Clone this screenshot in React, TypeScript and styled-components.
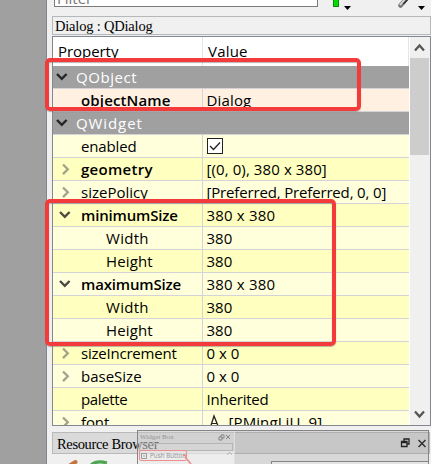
import React from "react";
import styled, { createGlobalStyle } from "styled-components";

const Global = createGlobalStyle`
  * { box-sizing: border-box; }
  body { margin: 0; overflow: hidden; background: #a0a0a0; }
`;
const Screen = styled.div`
  position: relative; display: flex; width: 431px; height: 464px; overflow: hidden;
  background: #a0a0a0; color: #000; font-family: "Open Sans", "Noto Sans", sans-serif;
`;
const Dock = styled.main`
  margin-left: 46px; width: 385px; height: 464px; background: #f0f0f0;
  border-left: 1px solid #828790; padding-left: 5px; display: flex; flex-direction: column;
`;
const Toolbar = styled.div`
  height: 16px; display: flex; align-items: flex-start; padding-left: 2px;
`;
const FilterBox = styled.div`
  width: 264px; height: 7px; border: 1px solid #7a7a7a; border-top: 0; background: #fff;
  overflow: hidden; font-size: 15px; line-height: 20px; color: #777; padding-left: 2px;
  display: flex; align-items: flex-end;
  span { display: block; margin-bottom: -2px; }
`;
const Tools = styled.svg` width: 113px; height: 16px; display: block; `;
const ObjectLabel = styled.div`
  height: 19px; border: 1px solid #b4b8b8; font: 14.5px/18px "Liberation Serif", serif;
  letter-spacing: -0.2px; padding-left: 2px; white-space: pre;
`;
const Tree = styled.section`
  margin-top: 1px; height: 390px; border: 1px solid #828790; display: flex; background: #fff; flex: none;
`;
const Grid = styled.div` width: 356px; height: 388px; overflow: hidden; `;
const Header = styled.div`
  display: flex; height: 29px; font-size: 15px; line-height: 29px; border-right: 1px solid #e5e5e5;
`;
const HeadCell = styled.div<{ $w?: number; $ls: number }>`
  width: ${p => (p.$w ? p.$w + "px" : "auto")}; padding-left: 5px; letter-spacing: ${p => p.$ls}px;
  border-right: ${p => (p.$w ? "1px solid #e5e5e5" : "0")};
`;
const tones = { group: "#a0a0a0", peach: "#fff0e1", light: "#ffffdc", dark: "#ffffbf" };
const Row = styled.div<{ $tone: keyof typeof tones }>`
  display: flex; height: 23px; background: ${p => tones[p.$tone]};
  border-bottom: 1px solid #d4d4d8; font-size: 15px; line-height: 22px; white-space: pre;
  color: ${p => (p.$tone === "group" ? "#fff" : "#000")};
`;
const Name = styled.div<{ $kind: string; $bold?: boolean }>`
  width: 150px; flex: none; display: flex;
  border-right: ${p => (p.$kind === "group" ? "0" : "1px solid #d4d4d8")};
  font-weight: ${p => (p.$bold ? 600 : 400)};
`;
const Twisty = styled.svg<{ $kind: string }>`
  flex: none; height: 22px; width: ${p => (p.$kind === "group" ? 23 : p.$kind === "child" ? 53 : 28)}px;
`;
const Label = styled.span<{ $ls: number }>` letter-spacing: ${p => p.$ls}px; `;
const Value = styled.div<{ $ls: number }>`
  display: flex; align-items: center; padding-left: 3.5px; letter-spacing: ${p => p.$ls}px;
`;
const Icon = styled.svg` flex: none; display: block; `;
const Scroll = styled.div`
  margin-left: 1px; width: 20px; height: 388px; background: #f0f0f0; display: flex; flex-direction: column;
`;
const Thumb = styled.div` height: 97px; background: #cdcdcd; margin-bottom: auto; width: 19px; `;
const TitleBar = styled.div`
  margin-top: 6px; height: 22px; width: 378px; background: #dadada; flex: none;
  border: 1px solid #b9b9b9; font: 14.5px/22px "Liberation Serif", serif; letter-spacing: -0.35px;
  padding-left: 4px; white-space: pre;
`;
const BottomTools = styled.div` display: flex; height: 10px; flex: none; `;
const Mark = styled.div<{ $x: number; $y: number; $w: number; $h: number }>`
  position: absolute; left: ${p => p.$x}px; top: ${p => p.$y}px; width: ${p => p.$w}px; height: ${p => p.$h}px;
  border: 4px solid #f43b3b; border-radius: 5px; box-shadow: 0 1px 1px #7778, inset 0 1px 1px #7778;
`;
const Ghost = styled.div`
  position: absolute; left: 137px; top: 430px; width: 292px; height: 34px;
  border: 1px solid #858585; border-bottom: 0; background: rgba(145,145,145,.25); display: flex;
`;
const GhostPanel = styled.div`
  position: relative; width: 97px; border-right: 1px solid #dedede; padding: 1px 1px 0;
  font-family: "Liberation Serif", serif; color: #949494; font-size: 7px;
  background: linear-gradient(#fff3 0 20px, #fff8 20px);
`;
const GhostTitle = styled.div`
  display: flex; justify-content: space-between; align-items: center; height: 11px; line-height: 11px; padding: 0 3px 0 1px;
`;
const GhostInput = styled.div` height: 8px; border: 1px solid #b5b5b5; background: #ddd4; `;
const GhostItem = styled.div`
  display: flex; align-items: center; gap: 3px; width: 48px; height: 11px; margin-top: -1px;
  border: 1.5px solid #ee8f8f; border-radius: 2px; font: 6.3px/9px "Open Sans", sans-serif; white-space: pre;
`;
const GhostLines = styled.svg` position: absolute; left: 44px; top: 17px; width: 52px; height: 16px; `;
const GhostBody = styled.div` flex: 1; display: flex; flex-direction: column; justify-content: flex-end; align-items: flex-end; `;
const GhostWindow = styled.div` width: 157px; height: 3px; border: 1px solid #858585; border-width: 1px 0 0 1px; background: #e4e4e4; `;
const DockButtons = styled.svg` position: absolute; left: 398px; top: 434px; width: 31px; height: 18px; `;

type Entry = { n: string; v?: string; tone: keyof typeof tones; kind: string; bold?: boolean; open?: boolean; ls?: number; vls?: number };
const rows: Entry[] = [
  { n: "QObject", tone: "group", kind: "group", open: true, ls: 0.55 },
  { n: "objectName", v: "Dialog", tone: "peach", kind: "leaf", bold: true, ls: 0.15, vls: 0.15 },
  { n: "QWidget", tone: "group", kind: "group", open: true, ls: 0.9 },
  { n: "enabled", v: "check", tone: "light", kind: "leaf", ls: -0.15 },
  { n: "geometry", v: "[(0, 0), 380 x 380]", tone: "dark", kind: "prop", bold: true, ls: 0.3, vls: 0.1 },
  { n: "sizePolicy", v: "[Preferred, Preferred, 0, 0]", tone: "light", kind: "prop", vls: -0.16 },
  { n: "minimumSize", v: "380 x 380", tone: "dark", kind: "prop", bold: true, open: true, ls: -0.17, vls: 0.18 },
  { n: "Width", v: "380", tone: "light", kind: "child", ls: 0.3 },
  { n: "Height", v: "380", tone: "dark", kind: "child", ls: 0.15 },
  { n: "maximumSize", v: "380 x 380", tone: "light", kind: "prop", bold: true, open: true, ls: -0.17, vls: 0.18 },
  { n: "Width", v: "380", tone: "dark", kind: "child", ls: 0.3 },
  { n: "Height", v: "380", tone: "light", kind: "child", ls: 0.15 },
  { n: "sizeIncrement", v: "0 x 0", tone: "dark", kind: "prop", ls: -0.22 },
  { n: "baseSize", v: "0 x 0", tone: "light", kind: "prop" },
  { n: "palette", v: "Inherited", tone: "dark", kind: "leaf", ls: -0.35, vls: -0.2 },
  { n: "font", v: "[PMingLiU, 9]", tone: "light", kind: "prop", ls: -0.1, vls: 0.1 },
];

function PropertyRow({ e }: { e: Entry }) {
  const dx = e.kind === "group" ? 0 : 3;
  return (
    <Row $tone={e.tone}>
      <Name $kind={e.kind} $bold={e.bold}>
        <Twisty $kind={e.kind}>
          {e.open && <path d={`M${4 + dx} 8l4.800 4.800 4.800-4.800`} fill="none" stroke={e.kind === "group" ? "#262626" : "#4a4a40"} strokeWidth="2.4" />}
          {!e.open && e.kind === "prop" && <path d="M10 6.5l4.800 4.800-4.800 4.800" fill="none" stroke="#a3a38c" strokeWidth="2.3" />}
        </Twisty>
        <Label $ls={e.ls ?? 0}>{e.n}</Label>
      </Name>
      <Value $ls={e.vls ?? 0}>
        {e.v === "check" ? (
          <Icon width="16" height="16"><rect x=".5" y=".5" width="15" height="15" fill="#fff" stroke="#222" /><path d="M3 8l3.5 3.5L13 4.5" fill="none" stroke="#222" strokeWidth="1.3" /></Icon>
        ) : e.n === "font" ? (
          <><Icon width="22" height="22"><path d="M3.500 16L7 5l4.500 11" fill="none" stroke="#222" strokeWidth="1.3" /><path d="M4.500 12.500h5.500M2 15.500h4M9 15.500h4.500" fill="none" stroke="#222" /></Icon>{e.v}</>
        ) : e.v}
      </Value>
    </Row>
  );
}

export default function App() {
  return (
    <Screen>
      <Global />
      <Dock>
        <Toolbar>
          <FilterBox><span>Filter</span></FilterBox>
          <Tools viewBox="318 0 113 16">
            <rect x="333.5" y="-3" width="5" height="9.5" fill="#0d0" stroke="#138513" />
            <path d="M344 6h7l-3.5 4zM418 6h7l-3.5 4z" fill="#000" />
            <path d="M400.500 5.500l7-8" stroke="#777" strokeWidth="4.500" strokeLinecap="round" /><path d="M400 5l6-7" stroke="#ddd" strokeWidth="1.8" /><path d="M403.500 4l4-4.500" stroke="#333" strokeWidth="1.500" />
          </Tools>
        </Toolbar>
        <ObjectLabel>Dialog : QDialog</ObjectLabel>
        <Tree>
          <Grid>
            <Header><HeadCell $w={150} $ls={-0.05}>Property</HeadCell><HeadCell $ls={0.2}>Value</HeadCell></Header>
            {rows.map((e, i) => <PropertyRow key={i} e={e} />)}
          </Grid>
          <Scroll>
            <Icon width="20" height="21"><path d="M5 13.500l4.500-5 4.500 5" fill="none" stroke="#555" strokeWidth="2.300" /></Icon>
            <Thumb />
            <Icon width="20" height="21"><path d="M5 7.500l4.500 5 4.500-5" fill="none" stroke="#555" strokeWidth="2.300" /></Icon>
          </Scroll>
        </Tree>
        <TitleBar>Resource Browser</TitleBar>
        <BottomTools>
          <Icon width="80" height="11"><path d="M17 12l6.500-4" stroke="#c4733e" strokeWidth="4" strokeLinecap="round" /><path d="M39 11q6-5 16-2" fill="none" stroke="#4fa552" strokeWidth="3" /></Icon>
        </BottomTools>
      </Dock>
      <Ghost>
        <GhostPanel>
          <GhostTitle>
            <span>Widget Box</span>
            <Icon width="12" height="7"><path d="M1 3h3v3H1zM3 3V1h3v3H4M8 1l4 4m0-4l-4 4" fill="none" stroke="#858585" /></Icon>
          </GhostTitle>
          <GhostInput />
          <GhostItem><Icon width="7" height="7"><path d="M1.500 1.500h5v5h-5zM3 4h2" fill="none" stroke="#999" /></Icon>Push Button</GhostItem>
          <GhostLines><path d="M3 9l6 7M1 7l4 1" stroke="#ee8f8f" strokeWidth="1.700" /><path d="M45 6.500l2.500-2 2.500 2" fill="none" stroke="#aaa" /></GhostLines>
        </GhostPanel>
        <GhostBody><GhostWindow /></GhostBody>
      </Ghost>
      <DockButtons viewBox="398 434 31 18"><path d="M404 441v-2h5v5h-2M401.500 441.500h5.500v5h-5.500zM401.500 442.500h5.500" fill="none" stroke="#222" strokeWidth="1.300" /><path d="M418.500 440l7 7m0-7l-7 7" stroke="#333" strokeWidth="1.500" /></DockButtons>
      <Mark $x={45} $y={58} $w={316} $h={53} />
      <Mark $x={45} $y={199} $w={291} $h={147} />
    </Screen>
  );
}
